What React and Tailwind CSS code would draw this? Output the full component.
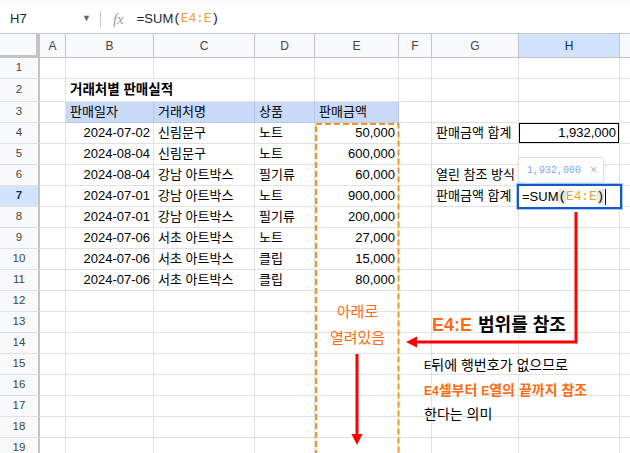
const SANS = { fontFamily: '"Liberation Sans", Arial, "Noto Sans CJK KR", sans-serif' };
const MONO = { fontFamily: '"Liberation Mono", "Courier New", monospace' };

const colW = ['w-[26px]', 'w-[88px]', 'w-[101px]', 'w-[60px]', 'w-[84px]', 'w-[33px]', 'w-[87px]', 'w-[101px]'];
const letters = ['A', 'B', 'C', 'D', 'E', 'F', 'G', 'H'];

const hdr = (t) => ({ t, head: true });
const R = (t) => ({ t, right: true });
const L = (t) => ({ t });

const sales = [
  ['2024-07-02', '신림문구', '노트', '50,000'],
  ['2024-08-04', '신림문구', '노트', '600,000'],
  ['2024-08-04', '강남 아트박스', '필기류', '60,000'],
  ['2024-07-01', '강남 아트박스', '노트', '900,000'],
  ['2024-07-01', '강남 아트박스', '필기류', '200,000'],
  ['2024-07-06', '서초 아트박스', '노트', '27,000'],
  ['2024-07-06', '서초 아트박스', '클립', '15,000'],
  ['2024-07-06', '서초 아트박스', '클립', '80,000'],
];

const extraG = { 4: '판매금액 합계', 6: '열린 참조 방식', 7: '판매금액 합계' };

function buildRows() {
  const rows = [];
  rows.push({ n: 1, h: 'h-[21px]', cells: [] });
  rows.push({ n: 2, h: 'h-[23px]', cells: [null, { t: '거래처별 판매실적', bold: true, noRight: true }] });
  rows.push({ n: 3, h: 'h-[21px]', cells: [null, hdr('판매일자'), hdr('거래처명'), hdr('상품'), hdr('판매금액')] });
  sales.forEach((s, i) => {
    const n = i + 4;
    const cells = [null, R(s[0]), L(s[1]), L(s[2]), R(s[3]), null, extraG[n] ? L(extraG[n]) : null];
    if (n === 4) cells.push({ t: '1,932,000', right: true, box: true });
    rows.push({ n, h: 'h-[21px]', cells });
  });
  for (let n = 12; n <= 19; n++) rows.push({ n, h: 'h-[21px]', cells: [] });
  return rows;
}

function Cell({ w, c }) {
  let cls = `${w} shrink-0 relative flex items-center whitespace-nowrap border-b border-[#e1e1e1] text-[13px] text-[#000]`;
  if (c?.head) cls += ' bg-[#c9daf8] border-r border-b-[#b7c9ea] border-r-[#b7c9ea] px-1';
  else if (c?.noRight) cls += ' overflow-visible px-1';
  else cls += ' border-r border-[#e1e1e1] px-1';
  if (c?.right) cls += ' justify-end pr-[3px]';
  if (c?.box) cls += ' shadow-[inset_0_0_0_1px_#000]';
  return (
    <div className={cls}>
      {c && <span className={c.bold ? 'font-bold text-[13.5px]' : ''}>{c.t}</span>}
    </div>
  );
}

function FormulaBar() {
  return (
    <div className="h-[34px] flex flex-col border-b border-[#c7c7c7]">
      <div className="h-[5px] bg-[#f9fbfd]" />
      <div className="flex-1 flex items-center text-[13px] text-[#1f1f1f]">
        <span className="w-[70px] pl-[10px]">H7</span>
        <span className="text-[9px] text-[#5f6368] ml-[12px]">▼</span>
        <span className="w-px h-[17px] bg-[#c7c7c7] ml-[9px]" />
        <span className="ml-[12px] italic text-[#9aa0a6] text-[15px]" style={{ fontFamily: '"Liberation Serif", serif' }}>fx</span>
        <span className="ml-[13px]">=SUM</span>
        <span style={MONO} className="text-[13px] tracking-[-0.2px]">
          (<span className="text-[#f29b38]">E4:E</span>)
        </span>
      </div>
    </div>
  );
}

function ColumnHeader() {
  return (
    <div className="flex h-[24px] bg-[#f8f9fa] border-b border-[#c4c4c4] text-[12px] text-[#444]">
      <div className="w-[40px] shrink-0 border-r-[4px] border-[#c4c4c4] border-b-[3px] -mb-px" />
      {letters.map((l, i) => (
        <div
          key={l}
          className={`${colW[i]} shrink-0 flex items-center justify-center border-r border-[#c4c4c4] ${l === 'H' ? 'bg-[#d3e3fd] text-[#0b2e6b]' : ''}`}
        >
          {l}
        </div>
      ))}
      <div className="flex-1" />
    </div>
  );
}

function Overlay() {
  return (
    <>
      <svg className="absolute left-0 top-0 pointer-events-none" width="630" height="453">
        <rect x="316" y="124" width="82.5" height="340" fill="none" stroke="#f7931e" strokeWidth="2" strokeDasharray="6 3" />
        <polyline points="576,212 576,342 414,342" fill="none" stroke="#ff0000" strokeWidth="3" />
        <polygon points="406,342 417,336.5 417,347.5" fill="#ff0000" />
        <line x1="357" y1="354" x2="357" y2="436" stroke="#ff0000" strokeWidth="3" />
        <polygon points="357,445 351.5,434 362.5,434" fill="#ff0000" />
      </svg>

      <div className="absolute left-[316px] top-[299px] w-[83px] flex flex-col text-[15px] text-[#ff6a13]">
        <div className="h-[26px] flex items-center justify-center">아래로</div>
        <div className="h-[26px] flex items-center justify-center">열려있음</div>
      </div>

      <div className="absolute left-[432px] top-[312px] h-[26px] flex items-center text-[18px] font-bold whitespace-nowrap">
        <span className="text-[#ff6a13]">E4:E</span>
        <span className="text-black ml-[6px]">범위를 참조</span>
      </div>

      <div className="absolute left-[424px] top-[353px] text-[14px] whitespace-nowrap text-black">
        <div className="h-[25px] flex items-center"><span className="text-[11px]">E</span>뒤에 행번호가 없으므로</div>
        <div className="h-[25px] flex items-center font-bold text-[#ff6a13]">
          <span className="text-[12px]">E4</span>셀부터&nbsp;<span className="text-[12px]">E</span>열의 끝까지 참조
        </div>
        <div className="h-[23px] flex items-center">한다는 의미</div>
      </div>

      <div className="absolute left-[518px] top-[157px] w-[86px] h-[26px] bg-white border border-[#e3e3e3] rounded-[3px] shadow-[0_1px_3px_rgba(0,0,0,0.12)] flex items-center pl-[8px]">
        <span style={MONO} className="text-[10px] text-[#7fa6ea]">1,932,000</span>
        <span className="text-[12px] text-[#b0b0b0] ml-[9px]">×</span>
        <span className="absolute left-[7px] -bottom-[5px] w-[8px] h-[8px] bg-white border-r border-b border-[#e3e3e3] rotate-45" />
      </div>

      <div className="absolute left-[517px] top-[184px] w-[105px] h-[25px] bg-white border-2 border-[#1558c9] shadow-[0_0_0_1px_#a8c7fa] flex items-center pl-[3px] text-[13px] text-black">
        <span>=SUM</span>
        <span style={MONO} className="tracking-[-0.2px]">
          <span className="bg-[#e8e8e8]">(</span>
          <span className="text-[#f29b38]">E4:E</span>
          <span className="bg-[#e8e8e8]">)</span>
        </span>
        <span className="w-px h-[16px] bg-black ml-px" />
      </div>
    </>
  );
}

export default function App() {
  const rows = buildRows();
  return (
    <div className="w-[630px] h-[453px] overflow-hidden bg-white relative" style={SANS}>
      <FormulaBar />
      <ColumnHeader />
      {rows.map((r) => (
        <div key={r.n} className={`flex ${r.h}`}>
          <div
            className={`w-[40px] shrink-0 flex items-center justify-center border-r-2 border-r-[#c4c4c4] border-b border-b-[#e1e1e1] text-[11.5px] ${
              r.n === 7 ? 'bg-[#d3e3fd] font-bold text-[#0b2e6b]' : 'bg-[#f8f9fa] text-[#444]'
            }`}
          >
            {r.n}
          </div>
          {colW.map((w, i) => (
            <Cell key={i} w={w} c={r.cells[i]} />
          ))}
          <div className="flex-1 border-b border-[#e1e1e1]" />
        </div>
      ))}
      <Overlay />
    </div>
  );
}
